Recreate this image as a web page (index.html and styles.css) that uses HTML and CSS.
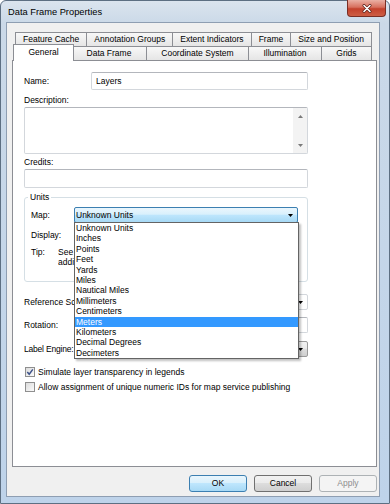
FILE: index.html
```html
<!DOCTYPE html>
<html lang="en">

<head>
  <title>Data Frame Properties</title>
  <link rel="stylesheet" href="styles.css">
</head>

<body>
  <div class="window">
    <div class="titlebar">
      <span class="title">Data Frame Properties</span>
      <span class="close">
        <svg width="10" height="9" viewBox="0 0 10 9">
          <path d="M2 1.5 L8 7.5 M8 1.5 L2 7.5" stroke="#5a2019" stroke-width="3" stroke-linecap="round" />
          <path d="M2 1.5 L8 7.5 M8 1.5 L2 7.5" stroke="#fff" stroke-width="1.6" stroke-linecap="round" />
        </svg>
      </span>
    </div>

    <div class="client">
      <div class="tabs">
        <div class="tab-row">
          <div class="tab">Feature Cache</div>
          <div class="tab">Annotation Groups</div>
          <div class="tab">Extent Indicators</div>
          <div class="tab">Frame</div>
          <div class="tab">Size and Position</div>
        </div>
        <div class="tab-row">
          <div class="tab active">General</div>
          <div class="tab">Data Frame</div>
          <div class="tab">Coordinate System</div>
          <div class="tab">Illumination</div>
          <div class="tab">Grids</div>
        </div>
      </div>

      <div class="panel">
        <div class="row name-row">
          <span class="name-label">Name:</span>
          <div class="textbox grow">Layers</div>
        </div>

        <div class="caption first">Description:</div>
        <div class="textbox memo">
          <div class="scrollbar">
            <svg width="5" height="3" viewBox="0 0 5 3"><polygon points="0,3 5,3 2.5,0" fill="#7a7a7a" /></svg>
            <svg width="5" height="3" viewBox="0 0 5 3"><polygon points="0,0 5,0 2.5,3" fill="#7a7a7a" /></svg>
          </div>
        </div>

        <div class="caption">Credits:</div>
        <div class="textbox credits"></div>

        <fieldset class="units">
          <legend>Units</legend>
          <div class="row unit-row map-row">
            <span class="unit-label">Map:</span>
            <div class="combo-wrap">
              <div class="combo focused">
                <span>Unknown Units</span>
                <svg class="arrow" width="5" height="3" viewBox="0 0 5 3"><polygon points="0,0 5,0 2.5,3" fill="#000" /></svg>
              </div>
              <div class="droplist">
                <div class="item">Unknown Units</div>
                <div class="item">Inches</div>
                <div class="item">Points</div>
                <div class="item">Feet</div>
                <div class="item">Yards</div>
                <div class="item">Miles</div>
                <div class="item">Nautical Miles</div>
                <div class="item">Millimeters</div>
                <div class="item">Centimeters</div>
                <div class="item selected">Meters</div>
                <div class="item">Kilometers</div>
                <div class="item">Decimal Degrees</div>
                <div class="item">Decimeters</div>
              </div>
            </div>
          </div>
          <div class="row unit-row">
            <span class="unit-label">Display:</span>
            <div class="combo grow"></div>
          </div>
          <div class="tip-row">
            <span class="tip-label">Tip:</span>
            <div class="tip-text">
              <div class="tip-line">See</div>
              <div class="tip-line">additional</div>
            </div>
          </div>
        </fieldset>

        <div class="row field-row scale-row">
          <span class="field-label clipped">Reference Scale:</span>
          <div class="combo white grow">
            <span></span>
            <svg class="arrow" width="5" height="3" viewBox="0 0 5 3"><polygon points="0,0 5,0 2.5,3" fill="#000" /></svg>
          </div>
        </div>
        <div class="row field-row rotation-row">
          <span class="field-label">Rotation:</span>
          <div class="textbox grow"></div>
        </div>
        <div class="row field-row engine-row">
          <span class="field-label tight">Label Engine:</span>
          <div class="combo grey grow">
            <span></span>
            <svg class="arrow" width="5" height="3" viewBox="0 0 5 3"><polygon points="0,0 5,0 2.5,3" fill="#000" /></svg>
          </div>
        </div>

        <div class="check-row first-check">
          <span class="checkbox">
            <svg width="8" height="8" viewBox="0 0 8 8"><path d="M1.3 4 L3.2 6.2 L6.8 1.4" fill="none" stroke="#3d5289" stroke-width="1.5" /></svg>
          </span>
          <span>Simulate layer transparency in legends</span>
        </div>
        <div class="check-row">
          <span class="checkbox"></span>
          <span>Allow assignment of unique numeric IDs for map service publishing</span>
        </div>
      </div>

      <div class="buttons">
        <div class="button default">OK</div>
        <div class="button">Cancel</div>
        <div class="button disabled">Apply</div>
      </div>
    </div>
  </div>
</body>

</html>
```

FILE: styles.css
```css
* {
  box-sizing: border-box;
}

body {
  margin: 0;
  font-family: "Liberation Sans", Arial, sans-serif;
  font-size: 8.5px;
  color: #000;
}

.window {
  width: 390px;
  height: 504px;
  border: 1px solid #5d6f82;
  border-radius: 6px 6px 0 0;
  padding: 0 9px 6px 5px;
  background: linear-gradient(#dbe4ee 0, #cbd9e8 22px, #bed3ea 100%);
  display: flex;
  flex-direction: column;
}

.titlebar {
  height: 21px;
  display: flex;
  justify-content: space-between;
  align-items: flex-start;
  margin-right: -6px;
}

.title {
  font-size: 9.3px;
  line-height: 11px;
  padding: 6px 0 0 2px;
}

.close {
  width: 39px;
  height: 17px;
  margin-top: -1px;
  border: 1px solid #7a2e24;
  border-top: none;
  border-radius: 0 0 4px 4px;
  background: linear-gradient(#eab0a4, #d7705e 45%, #c3412c 55%, #cd5e45);
  display: flex;
  align-items: center;
  justify-content: center;
}

.client {
  height: 475px;
  background: #f0f0f0;
  border: 1px solid #8e9eb2;
  padding: 9px 2px 4px 5px;
  display: flex;
  flex-direction: column;
}

/* tabs */
.tabs {
  padding: 0 5px 0 3px;
}

.tab-row {
  display: flex;
  height: 14px;
}

.tab {
  flex: 1 1 auto;
  padding: 0 4px;
  margin-left: -1px;
  border: 1px solid #8c8e94;
  border-bottom: none;
  background: linear-gradient(#f8f8f8, #e5e5e5);
  text-align: center;
  line-height: 13px;
  white-space: nowrap;
}

.tab:first-child {
  margin-left: 0;
}

.tab.active {
  position: relative;
  z-index: 1;
  height: 17px;
  margin: -2px -2px -1px -2px;
  background: #fff;
  line-height: 15px;
}

.panel {
  height: 407px;
  background: #fff;
  border: 1px solid #8c8e94;
  padding: 0 68px 0 11px;
}

/* fields */
.row {
  display: flex;
  align-items: center;
}

.grow {
  flex: 1;
}

.textbox {
  background: #fff;
  border: 1px solid #d3d7dc;
  border-top-color: #b3b6bc;
  border-radius: 2px;
}

.name-row {
  margin-top: 11px;
  height: 18px;
}

.name-label {
  width: 67px;
}

.name-row .textbox {
  height: 18px;
  line-height: 16px;
  padding-left: 4px;
}

.caption {
  line-height: 10px;
  margin-top: 3px;
}

.caption.first {
  margin-top: 5px;
}

.memo {
  height: 47px;
  margin-top: 2px;
  display: flex;
  justify-content: flex-end;
}

.scrollbar {
  width: 14px;
  background: #f3f3f3;
  display: flex;
  flex-direction: column;
  align-items: center;
  justify-content: space-between;
  padding: 7px 0 6px;
}

.credits {
  height: 19px;
  margin-top: 2px;
}

.units {
  margin: 4px 0 0;
  padding: 0 9px 14px 6px;
  border: 1px solid #d5dfe5;
  border-radius: 3px;
  min-width: 0;
}

.units legend {
  padding: 0 2px;
  margin-left: -3px;
  line-height: 10px;
}

.unit-row {
  height: 16px;
  margin-top: 4px;
}

.map-row {
  margin-top: 5px;
}

.unit-label {
  width: 43px;
}

.combo-wrap {
  flex: 1;
  position: relative;
  height: 16px;
}

.combo {
  height: 16px;
  border: 1px solid #adb2b5;
  border-radius: 2px;
  background: linear-gradient(#f2f2f2, #ebebeb 45%, #dddddd 50%, #cfcfcf);
  display: flex;
  align-items: center;
  justify-content: space-between;
  padding-left: 1px;
}

.combo.focused {
  border-color: #3c7fb1;
  background: linear-gradient(#eaf6fd, #d9f0fc 45%, #bee6fd 50%, #a7d9f5);
}

.combo.white {
  background: #fff;
  border-color: #d3d7dc;
}

.combo.grey {
  border-color: #9a9a9a;
}

.arrow {
  margin-right: 4px;
}

.droplist {
  position: absolute;
  z-index: 2;
  top: 15px;
  left: 0;
  width: 225px;
  height: 137px;
  background: #fff;
  border: 1px solid #646464;
  box-shadow: 2px 2px 2px rgba(0, 0, 0, 0.25);
}

.item {
  height: 10.4px;
  line-height: 10.4px;
  padding-left: 1px;
  white-space: nowrap;
}

.item.selected {
  background: #3399ff;
  color: #fff;
}

.tip-row {
  display: flex;
  margin-top: 4px;
  line-height: 10px;
}

.tip-label {
  width: 27px;
  flex: none;
}

.tip-text {
  width: 16px;
  overflow: hidden;
}

.tip-line {
  white-space: nowrap;
}

.field-row {
  height: 16px;
}

.scale-row {
  margin-top: 12px;
}

.rotation-row {
  margin-top: 7px;
}

.engine-row {
  margin-top: 8px;
}

.field-label {
  width: 76px;
  white-space: nowrap;
  overflow: hidden;
}

.field-label.clipped {
  width: 50px;
  margin-right: 26px;
}

.field-label.tight {
  letter-spacing: -0.2px;
}

.field-row .textbox,
.field-row .combo {
  height: 16px;
}

/* checkboxes */
.check-row {
  display: flex;
  align-items: center;
  height: 11px;
  margin-top: 4px;
}

.first-check {
  margin-top: 9px;
}

.checkbox {
  width: 10px;
  height: 10px;
  margin: 0 3px 0 1px;
  border: 1px solid #8f8f8f;
  background: linear-gradient(135deg, #dcdcdc, #fbfbfb);
  display: flex;
  align-items: center;
  justify-content: center;
}

/* buttons */
.buttons {
  display: flex;
  justify-content: flex-end;
  gap: 7px;
  margin-top: 8px;
}

.button {
  width: 58px;
  height: 17px;
  line-height: 15px;
  text-align: center;
  border: 1px solid #707070;
  border-radius: 3px;
  background: linear-gradient(#f2f2f2, #ebebeb 45%, #dddddd 50%, #cfcfcf);
}

.button.default {
  border-color: #3c7fb1;
  background: linear-gradient(#eaf6fd, #d9f0fc 45%, #bee6fd 50%, #a7d9f5);
}

.button.disabled {
  border-color: #adb2b5;
  background: #f4f4f4;
  color: #8d8d8d;
}
```
